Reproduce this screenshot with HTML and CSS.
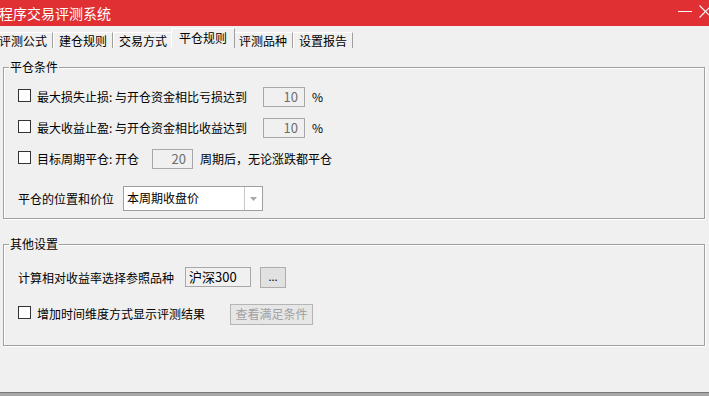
FILE: index.html
```html
<!DOCTYPE html>
<html lang="zh">
<head>
<meta charset="utf-8">
<link rel="stylesheet" href="styles.css">
</head>
<body>
<div class="window">
  <div class="titlebar">
    <span class="title">程序交易评测系统</span>
    <div class="controls">
      <svg class="ic-min" width="14" height="12" viewBox="0 0 14 12"><line x1="0" y1="6.5" x2="14" y2="6.5" stroke="#fff" stroke-width="1"/></svg>
      <svg class="ic-close" width="14" height="13" viewBox="0 0 14 13"><line x1="0.5" y1="0.5" x2="12.5" y2="12.5" stroke="#fff" stroke-width="1.1"/><line x1="12.5" y1="0.5" x2="0.5" y2="12.5" stroke="#fff" stroke-width="1.1"/></svg>
    </div>
  </div>

  <div class="tabs">
    <div class="tab first">评测公式</div>
    <div class="tab">建仓规则</div>
    <div class="tab">交易方式</div>
    <div class="tab active">平仓规则</div>
    <div class="tab">评测品种</div>
    <div class="tab">设置报告</div>
  </div>

  <div class="group g1">
    <div class="legend">平仓条件</div>
    <div class="row r1">
      <span class="cb"></span>
      <span class="lbl w-long">最大损失止损: 与开仓资金相比亏损达到</span>
      <span class="num">10</span>
      <span class="unit">%</span>
    </div>
    <div class="row r2">
      <span class="cb"></span>
      <span class="lbl w-long">最大收益止盈: 与开仓资金相比收益达到</span>
      <span class="num">10</span>
      <span class="unit">%</span>
    </div>
    <div class="row r3">
      <span class="cb"></span>
      <span class="lbl w-short">目标周期平仓: 开仓</span>
      <span class="num n3">20</span>
      <span class="unit">周期后，无论涨跌都平仓</span>
    </div>
    <div class="row r4">
      <span class="lbl w-pos">平仓的位置和价位</span>
      <div class="select">
        <span class="select-text">本周期收盘价</span>
        <span class="select-btn"><svg width="7" height="4" viewBox="0 0 7 4"><path d="M0 0 H7 L3.5 4 Z" fill="#a8a8a8"/></svg></span>
      </div>
    </div>
  </div>

  <div class="group g2">
    <div class="legend">其他设置</div>
    <div class="row o1">
      <span class="lbl w-ref">计算相对收益率选择参照品种</span>
      <span class="textbox">沪深300</span>
      <span class="btn dots">...</span>
    </div>
    <div class="row o2">
      <span class="cb"></span>
      <span class="lbl w-time">增加时间维度方式显示评测结果</span>
      <span class="btn disabled">查看满足条件</span>
    </div>
  </div>

  <div class="footer"></div>
</div>
</body>
</html>
```

FILE: styles.css
```css
* { box-sizing: border-box; }

html, body {
  margin: 0;
  padding: 0;
  background: #f0f0f0;
}

body {
  font-family: "Noto Sans CJK SC", "Microsoft YaHei", sans-serif;
  font-size: 12px;
  color: #000;
}

.window {
  width: 709px;
  height: 396px;
  overflow: hidden;
  display: flex;
  flex-direction: column;
  background: #f0f0f0;
}

/* title bar */
.titlebar {
  height: 26px;
  background: #e03033;
  display: flex;
  align-items: center;
  justify-content: space-between;
  flex-shrink: 0;
}

.title {
  color: #fff;
  font-size: 14px;
  line-height: 26px;
  margin-left: -1px;
  padding-bottom: 1px;
}

.controls {
  display: flex;
  align-items: flex-start;
  gap: 7px;
  margin-right: -4px;
  height: 26px;
  padding-top: 5px;
}

.ic-min { display: block; }
.ic-close { display: block; }

/* tabs */
.tabs {
  height: 22px;
  display: flex;
  align-items: flex-end;
  flex-shrink: 0;
}

.tab {
  width: 60px;
  height: 16px;
  line-height: 15px;
  padding: 0 5px;
  border-left: 1px solid #ffffff;
  border-right: 1px solid #a0a0a0;
  border-top: 1px solid #ffffff;
  white-space: nowrap;
  background: #f0f0f0;
  flex-shrink: 0;
}

.tab.first {
  margin-left: -7px;
}

.tab.active {
  width: 64px;
  height: 20px;
  line-height: 18px;
  margin: 0 -2px;
  padding: 0 7px;
  position: relative;
  z-index: 1;
}

/* group boxes */
.group {
  margin: 0 4px 0 3px;
  border: 1px solid #a0a0a0;
  box-shadow: 1px 1px 0 #ffffff, inset 1px 1px 0 #ffffff;
  padding-left: 14px;
  flex-shrink: 0;
}

.g1 {
  margin-top: 19px;
  padding-bottom: 7px;
}

.g2 {
  margin-top: 25px;
  padding-bottom: 20px;
}

.legend {
  width: fit-content;
  height: 16px;
  line-height: 16px;
  margin: -9px 0 -7px -9px;
  padding: 0 1px;
  background: #f0f0f0;
}

.row {
  display: flex;
  align-items: center;
  height: 22px;
  white-space: nowrap;
}

.r1 { margin-top: 18px; }
.r2 { margin-top: 9px; }
.r3 { margin-top: 9px; }
.r4 { margin-top: 16px; height: 25px; }

.o1 { margin-top: 22px; }
.o2 { margin-top: 14px; }

.cb {
  width: 13px;
  height: 13px;
  border: 1px solid #333;
  background: #fff;
  flex-shrink: 0;
  margin-right: 6px;
  margin-top: -3px;
}

.lbl {
  flex-shrink: 0;
  line-height: 16px;
}

.w-long { width: 226px; }
.w-short { width: 115px; }
.w-pos { width: 105px; }
.w-ref { width: 167px; }
.w-time { width: 193px; }

.num {
  width: 42px;
  height: 20px;
  border: 1px solid #a8a8a8;
  background: #f0f0f0;
  color: #6d6d6d;
  text-align: right;
  padding-right: 6px;
  line-height: 18px;
  font-size: 13px;
  flex-shrink: 0;
}

.num.n3 {
  width: 41px;
}

.unit {
  margin-left: 7px;
  line-height: 16px;
}

.select {
  width: 140px;
  height: 25px;
  border: 1px solid #a0a0a0;
  background: #fff;
  display: flex;
  flex-shrink: 0;
}

.select-text {
  flex: 1;
  padding-left: 3px;
  line-height: 22px;
}

.select-btn {
  width: 18px;
  border-left: 1px solid #c8c8c8;
  display: flex;
  align-items: center;
  justify-content: center;
  padding-top: 1px;
}

.select-btn svg { display: block; }

.textbox {
  width: 66px;
  height: 20px;
  border: 1px solid #a8a8a8;
  background: #f0f0f0;
  padding-left: 3px;
  line-height: 17px;
  font-size: 13px;
  flex-shrink: 0;
  margin-top: -3px;
}

.btn {
  height: 21px;
  border: 1px solid #adadad;
  background: #e1e1e1;
  text-align: center;
  flex-shrink: 0;
}

.dots {
  width: 26px;
  margin-left: 9px;
  line-height: 16px;
  font-size: 11px;
  margin-top: -2px;
}

.disabled {
  width: 83px;
  color: #a0a0a0;
  background: #e6e6e6;
  border-color: #b5b5b5;
  line-height: 18px;
  margin-top: 1px;
}

.footer {
  margin-top: auto;
  height: 4px;
  border-top: 1px solid #7a7a7a;
  background: #a8a8a8;
  flex-shrink: 0;
}
```
